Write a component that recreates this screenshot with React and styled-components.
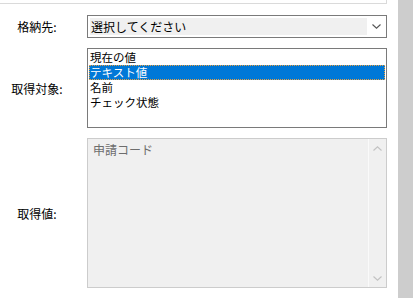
import React from 'react';
import styled, { createGlobalStyle } from 'styled-components';

const GlobalStyle = createGlobalStyle`
  html, body {
    margin: 0;
    padding: 0;
    background: #ffffff;
  }
  body {
    font-family: "Noto Sans CJK JP", "Noto Sans", sans-serif;
    font-size: 12px;
    color: #000000;
  }
`;

const Page = styled.div`
  display: flex;
  width: 419px;
  height: 298px;
  overflow: hidden;
`;

const Main = styled.div`
  width: 398px;
  display: flex;
  flex-direction: column;
`;

const ScrollTrack = styled.div`
  width: 15px;
  background: #cdcdcd;
`;

const PrevBox = styled.div`
  width: 386px;
  height: 3px;
  border-right: 1px solid #dadada;
  border-bottom: 1px solid #dadada;
`;

const Form = styled.div`
  display: grid;
  grid-template-columns: 74px 300px;
  column-gap: 13px;
  row-gap: 10px;
  padding-top: 11px;
  align-items: center;
`;

const Label = styled.div`
  text-align: center;
  line-height: 15px;
  white-space: nowrap;
`;

const Combo = styled.div`
  box-sizing: border-box;
  height: 23px;
  border: 1px solid #7a7a7a;
  padding: 2px 0 2px 2px;
  display: flex;
  background: #ffffff;
`;

const ComboValue = styled.div`
  flex: 1;
  background: #f0f0f0;
  line-height: 17px;
  padding-left: 1px;
`;

const ComboArrow = styled.div`
  width: 19px;
  display: flex;
  align-items: center;
  justify-content: center;
  color: #555;
`;

const ListBox = styled.div`
  box-sizing: border-box;
  height: 80px;
  border: 1px solid #7a7a7a;
  padding: 1px;
  background: #ffffff;
`;

const ListItem = styled.div`
  box-sizing: border-box;
  height: 15px;
  line-height: 15px;
  font-size: 11.5px;
  padding-left: 1px;
  white-space: nowrap;
  overflow: hidden;
  background: ${p => (p.$selected ? '#0078d7' : 'transparent')};
  color: ${p => (p.$selected ? '#ffffff' : '#000000')};
  outline: ${p => (p.$selected ? '1px dotted #e8a040' : 'none')};
  outline-offset: -1px;
`;

const TextArea = styled.div`
  box-sizing: border-box;
  height: 150px;
  border: 1px solid #cccccc;
  background: #f0f0f0;
  display: flex;
`;

const TextBody = styled.div`
  flex: 1;
  padding: 3px 5px;
  color: #6d6d6d;
  line-height: 15px;
`;

const ScrollBar = styled.div`
  width: 17px;
  border-left: 1px solid #fafafa;
  display: flex;
  flex-direction: column;
  justify-content: space-between;
  align-items: center;
  padding: 7px 0 6px;
  color: #c2c2c2;
`;

const Chevron = ({ up }) => (
  <svg width="9" height="5" viewBox="0 0 9 5">
    <path
      d={up ? 'M0.5 4.5 L4.5 0.8 L8.5 4.5' : 'M0.5 0.5 L4.5 4.2 L8.5 0.5'}
      fill="none"
      stroke="currentColor"
      strokeWidth="1.1"
    />
  </svg>
);

export default function App() {
  return (
    <>
      <GlobalStyle />
      <Page>
        <Main>
          <PrevBox />
          <Form>
            <Label>格納先:</Label>
            <Combo>
              <ComboValue>選択してください</ComboValue>
              <ComboArrow>
                <Chevron />
              </ComboArrow>
            </Combo>

            <Label>取得対象:</Label>
            <ListBox>
              <ListItem>現在の値</ListItem>
              <ListItem $selected>テキスト値</ListItem>
              <ListItem>名前</ListItem>
              <ListItem>チェック状態</ListItem>
            </ListBox>

            <Label>取得値:</Label>
            <TextArea>
              <TextBody>申請コード</TextBody>
              <ScrollBar>
                <Chevron up />
                <Chevron />
              </ScrollBar>
            </TextArea>
          </Form>
        </Main>
        <ScrollTrack />
      </Page>
    </>
  );
}
